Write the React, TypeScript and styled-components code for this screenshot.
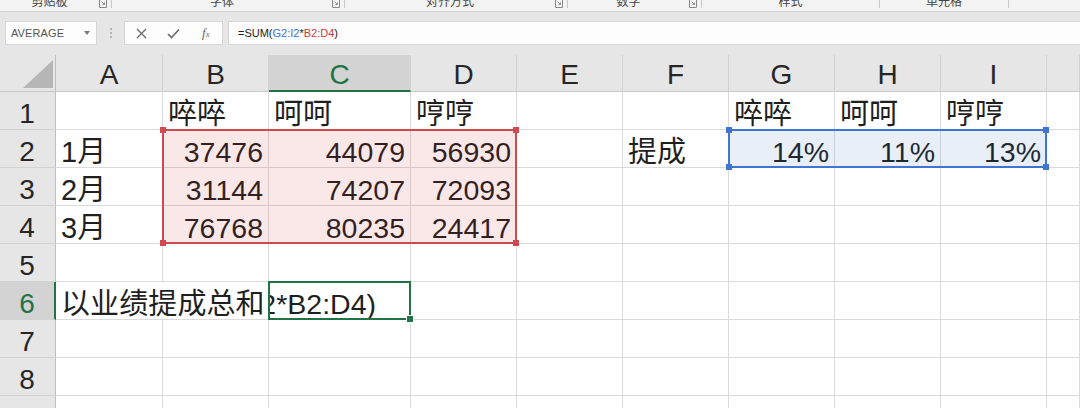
import React from 'react'
import styled, { createGlobalStyle } from 'styled-components'

const GlobalStyle = createGlobalStyle`
  html, body {
    margin: 0;
    padding: 0;
    overflow: hidden;
    background: #ffffff;
  }
  body {
    font-family: "Liberation Sans", "Noto Sans CJK SC", sans-serif;
  }
`

const GREEN = '#217346'
const RED = '#cf4950'
const BLUE = '#3f74d0'

const COLS = [
  { key: 'A', w: 107 },
  { key: 'B', w: 106 },
  { key: 'C', w: 142 },
  { key: 'D', w: 106 },
  { key: 'E', w: 106 },
  { key: 'F', w: 106 },
  { key: 'G', w: 106 },
  { key: 'H', w: 106 },
  { key: 'I', w: 106 },
  { key: '', w: 0 },
]

const ROW_COUNT = 9
const ACTIVE_COL = 'C'
const ACTIVE_ROW = 6

const DATA: Record<number, Record<string, string>> = {
  1: { B: '啐啐', C: '呵呵', D: '哼哼', G: '啐啐', H: '呵呵', I: '哼哼' },
  2: { A: '1月', B: '37476', C: '44079', D: '56930', F: '提成', G: '14%', H: '11%', I: '13%' },
  3: { A: '2月', B: '31144', C: '74207', D: '72093' },
  4: { A: '3月', B: '76768', C: '80235', D: '24417' },
  6: { A: '以业绩提成总和' },
}

// text that spills into the empty cell on its right
const SPANS: Record<string, number> = { '6A': 2 }
const FORMULA = '=SUM(G2:I2*B2:D4)'

const RIBBON = [
  { label: '剪贴板', w: 112, launcher: true },
  { label: '字体', w: 233, launcher: true },
  { label: '对齐方式', w: 223, launcher: true },
  { label: '数字', w: 134, launcher: true },
  { label: '样式', w: 178, launcher: false },
  { label: '单元格', w: 129, launcher: false },
]

const Window = styled.div`
  width: 1080px;
  height: 408px;
  overflow: hidden;
  display: flex;
  flex-direction: column;
  background: #e6e6e6;
`

const RibbonStrip = styled.div`
  display: flex;
  height: 11px;
  flex-shrink: 0;
  overflow: hidden;
  background: #f3f3f3;
  border-bottom: 1px solid #d3d3d3;
`

const RibbonGroup = styled.div<{ $w: number }>`
  width: ${p => p.$w}px;
  height: 8px;
  flex-shrink: 0;
  display: flex;
  align-items: flex-start;
  box-sizing: border-box;
  border-right: 1px solid #c8c8c8;
`

const RibbonLabel = styled.span`
  flex: 1;
  margin-top: -5px;
  text-align: center;
  font-size: 12px;
  line-height: 14px;
  color: #444;
`

const Launcher = styled.svg`
  width: 8px;
  height: 8px;
  margin: 0 4px 0 0;
  flex-shrink: 0;
`

const FormulaRow = styled.div`
  height: 43px;
  flex-shrink: 0;
  box-sizing: border-box;
  padding: 9px 0 10px 5px;
  display: flex;
  align-items: stretch;
`

const NameBox = styled.div`
  width: 92px;
  box-sizing: border-box;
  background: #fdfdfd;
  border: 1px solid #d6d6d6;
  display: flex;
  align-items: center;
  justify-content: space-between;
  padding: 0 6px 0 5px;
  font-size: 11px;
  color: #555;
  letter-spacing: 0.1px;
`

const Caret = styled.span`
  width: 0;
  height: 0;
  border-left: 3.5px solid transparent;
  border-right: 3.5px solid transparent;
  border-top: 4px solid #7a7a7a;
`

const DotsColumn = styled.div`
  width: 27px;
  display: flex;
  flex-direction: column;
  align-items: center;
  justify-content: center;
  gap: 2px;
`

const Dot = styled.span`
  width: 2px;
  height: 2px;
  background: #b4b4b4;
`

const FuncBox = styled.div`
  width: 99px;
  box-sizing: border-box;
  background: #fdfdfd;
  border: 1px solid #d6d6d6;
  display: flex;
`

const IconSlot = styled.div`
  width: 33px;
  display: flex;
  align-items: center;
  justify-content: center;
  color: #6b6b6b;
`

const Fx = styled.span`
  font-family: "Liberation Serif", serif;
  font-style: italic;
  font-size: 13px;
  color: #666;
  span {
    font-size: 9px;
  }
`

const FormulaInput = styled.div`
  flex: 1;
  margin-left: 5px;
  background: #fdfdfd;
  border-top: 1px solid #d6d6d6;
  border-bottom: 1px solid #d6d6d6;
  border-left: 1px solid #d6d6d6;
  display: flex;
  align-items: center;
  padding-left: 9px;
  font-size: 11px;
  color: #222;
  white-space: nowrap;
`

const Ref = styled.span<{ $color: string }>`
  color: ${p => p.$color};
`

const Sheet = styled.div`
  flex: 1;
  display: grid;
  grid-template-columns: 56px ${COLS.map(c => (c.w ? `${c.w}px` : '1fr')).join(' ')};
  grid-template-rows: 37px repeat(${ROW_COUNT}, 38px);
  background: #ffffff;
  overflow: hidden;
`

const Corner = styled.div`
  grid-row: 1;
  grid-column: 1;
  background: #e6e6e6;
  border-right: 1px solid #bfbfbf;
  border-bottom: 1px solid #c8c8c8;
  display: flex;
  align-items: flex-end;
  justify-content: flex-end;
  padding: 0 2px 3px 0;
`

const ColHead = styled.div<{ $c: number; $active: boolean }>`
  grid-row: 1;
  grid-column: ${p => p.$c};
  box-sizing: border-box;
  background: ${p => (p.$active ? '#d3d3d3' : '#e6e6e6')};
  color: ${p => (p.$active ? GREEN : '#262626')};
  border-right: 1px solid #d2d2d2;
  border-bottom: ${p => (p.$active ? `2px solid ${GREEN}` : '1px solid #cbcbcb')};
  display: flex;
  align-items: flex-end;
  justify-content: center;
  padding-bottom: ${p => (p.$active ? 1 : 2)}px;
  font-size: 28px;
  line-height: 28px;
`

const RowHead = styled.div<{ $r: number; $active: boolean }>`
  grid-row: ${p => p.$r};
  grid-column: 1;
  box-sizing: border-box;
  background: ${p => (p.$active ? '#d3d3d3' : '#e6e6e6')};
  color: ${p => (p.$active ? GREEN : '#262626')};
  border-right: ${p => (p.$active ? `2px solid ${GREEN}` : '1px solid #bfbfbf')};
  border-bottom: 1px solid #d2d2d2;
  display: flex;
  align-items: flex-end;
  justify-content: center;
  padding: 0 ${p => (p.$active ? 0 : 1)}px 1px 0;
  font-size: 28px;
  line-height: 28px;
`

const Cell = styled.div<{ $r: number; $c: number; $span: number; $right: boolean }>`
  grid-row: ${p => p.$r};
  grid-column: ${p => p.$c} / span ${p => p.$span};
  min-width: 0;
  box-sizing: border-box;
  border-right: 1px solid #dadada;
  border-bottom: 1px solid #dadada;
  display: flex;
  align-items: flex-end;
  justify-content: ${p => (p.$right ? 'flex-end' : 'flex-start')};
  padding: 0 5px 1px 5px;
  font-size: 28.5px;
  line-height: 28px;
  color: #1f1f1f;
  white-space: nowrap;
  overflow: hidden;
`

const CjkText = styled.span`
  font-size: 29px;
  letter-spacing: 0.1px;
`

const EditCell = styled(Cell)`
  padding-right: 34px;
  span {
    flex-shrink: 0;
  }
`

const Selection = styled.div<{ $cols: string; $rows: string; $color: string; $fill: string }>`
  grid-column: ${p => p.$cols};
  grid-row: ${p => p.$rows};
  margin: -1px 0 0 -1px;
  box-sizing: border-box;
  border: 2px solid ${p => p.$color};
  background: ${p => p.$fill};
  position: relative;
  z-index: 2;
  pointer-events: none;
`

const Handle = styled.span<{ $color: string; $x: 'left' | 'right'; $y: 'top' | 'bottom'; $ring?: boolean }>`
  position: absolute;
  width: 6px;
  height: 6px;
  box-sizing: border-box;
  background: ${p => p.$color};
  ${p => p.$x}: -4px;
  ${p => p.$y}: -4px;
  outline: ${p => (p.$ring ? '1px solid #ffffff' : 'none')};
`

const Corners: React.FC<{ color: string }> = ({ color }) => (
  <>
    <Handle $color={color} $x="left" $y="top" />
    <Handle $color={color} $x="right" $y="top" />
    <Handle $color={color} $x="left" $y="bottom" />
    <Handle $color={color} $x="right" $y="bottom" />
  </>
)

const renderCells = () => {
  const out: React.ReactNode[] = []
  for (let r = 1; r <= ROW_COUNT; r++) {
    let skip = 0
    COLS.forEach((col, i) => {
      if (skip > 0) {
        skip--
        return
      }
      const id = `${r}${col.key}`
      const gridRow = r + 1
      const gridCol = i + 2
      if (r === ACTIVE_ROW && col.key === ACTIVE_COL) {
        out.push(
          <EditCell key={id} $r={gridRow} $c={gridCol} $span={1} $right>
            <span>{FORMULA}</span>
          </EditCell>
        )
        return
      }
      const text = DATA[r]?.[col.key] ?? ''
      const span = SPANS[id] ?? 1
      const numeric = /^[\d%]+$/.test(text)
      skip = span - 1
      out.push(
        <Cell key={id} $r={gridRow} $c={gridCol} $span={span} $right={numeric}>
          {text && !numeric ? <CjkText>{text}</CjkText> : text}
        </Cell>
      )
    })
  }
  return out
}

export default function App() {
  return (
    <Window>
      <GlobalStyle />
      <RibbonStrip>
        {RIBBON.map(g => (
          <RibbonGroup key={g.label} $w={g.w}>
            <RibbonLabel>{g.label}</RibbonLabel>
            {g.launcher && (
              <Launcher viewBox="0 0 8 8">
                <path d="M0.5 -2 V7.5 H7.5 V-2" fill="none" stroke="#8a8a8a" strokeWidth="1" />
                <path d="M2.5 1.5 L5.5 4.5 M5.5 2.5 V4.5 H3.5" fill="none" stroke="#8a8a8a" strokeWidth="0.9" />
              </Launcher>
            )}
          </RibbonGroup>
        ))}
      </RibbonStrip>

      <FormulaRow>
        <NameBox>
          AVERAGE
          <Caret />
        </NameBox>
        <DotsColumn>
          <Dot />
          <Dot />
          <Dot />
        </DotsColumn>
        <FuncBox>
          <IconSlot>
            <svg width="11" height="11" viewBox="0 0 11 11">
              <path d="M1 1 L10 10 M10 1 L1 10" stroke="currentColor" strokeWidth="1.3" />
            </svg>
          </IconSlot>
          <IconSlot>
            <svg width="13" height="11" viewBox="0 0 13 11">
              <path d="M1 6 L4.5 9.5 L12 1.5" fill="none" stroke="currentColor" strokeWidth="1.6" />
            </svg>
          </IconSlot>
          <IconSlot>
            <Fx>
              f<span>x</span>
            </Fx>
          </IconSlot>
        </FuncBox>
        <FormulaInput>
          =SUM(<Ref $color="#3a72d6">G2:I2</Ref>*<Ref $color="#d0383f">B2:D4</Ref>)
        </FormulaInput>
      </FormulaRow>

      <Sheet>
        <Corner>
          <svg width="30" height="28" viewBox="0 0 30 28">
            <path d="M30 0 V28 H0 Z" fill="#b6b6b6" />
          </svg>
        </Corner>
        {COLS.map((col, i) => (
          <ColHead key={`h${i}`} $c={i + 2} $active={col.key === ACTIVE_COL}>
            {col.key}
          </ColHead>
        ))}
        {Array.from({ length: ROW_COUNT }, (_, i) => (
          <RowHead key={`r${i}`} $r={i + 2} $active={i + 1 === ACTIVE_ROW}>
            {i + 1}
          </RowHead>
        ))}
        {renderCells()}

        <Selection $cols="3 / 6" $rows="3 / 6" $color={RED} $fill="rgba(205, 45, 55, 0.11)">
          <Corners color={RED} />
        </Selection>
        <Selection $cols="8 / 11" $rows="3 / 4" $color={BLUE} $fill="rgba(45, 105, 200, 0.11)">
          <Corners color={BLUE} />
        </Selection>
        <Selection $cols="4 / 5" $rows="7 / 8" $color={GREEN} $fill="transparent">
          <Handle $color={GREEN} $x="right" $y="bottom" $ring />
        </Selection>
      </Sheet>
    </Window>
  )
}
